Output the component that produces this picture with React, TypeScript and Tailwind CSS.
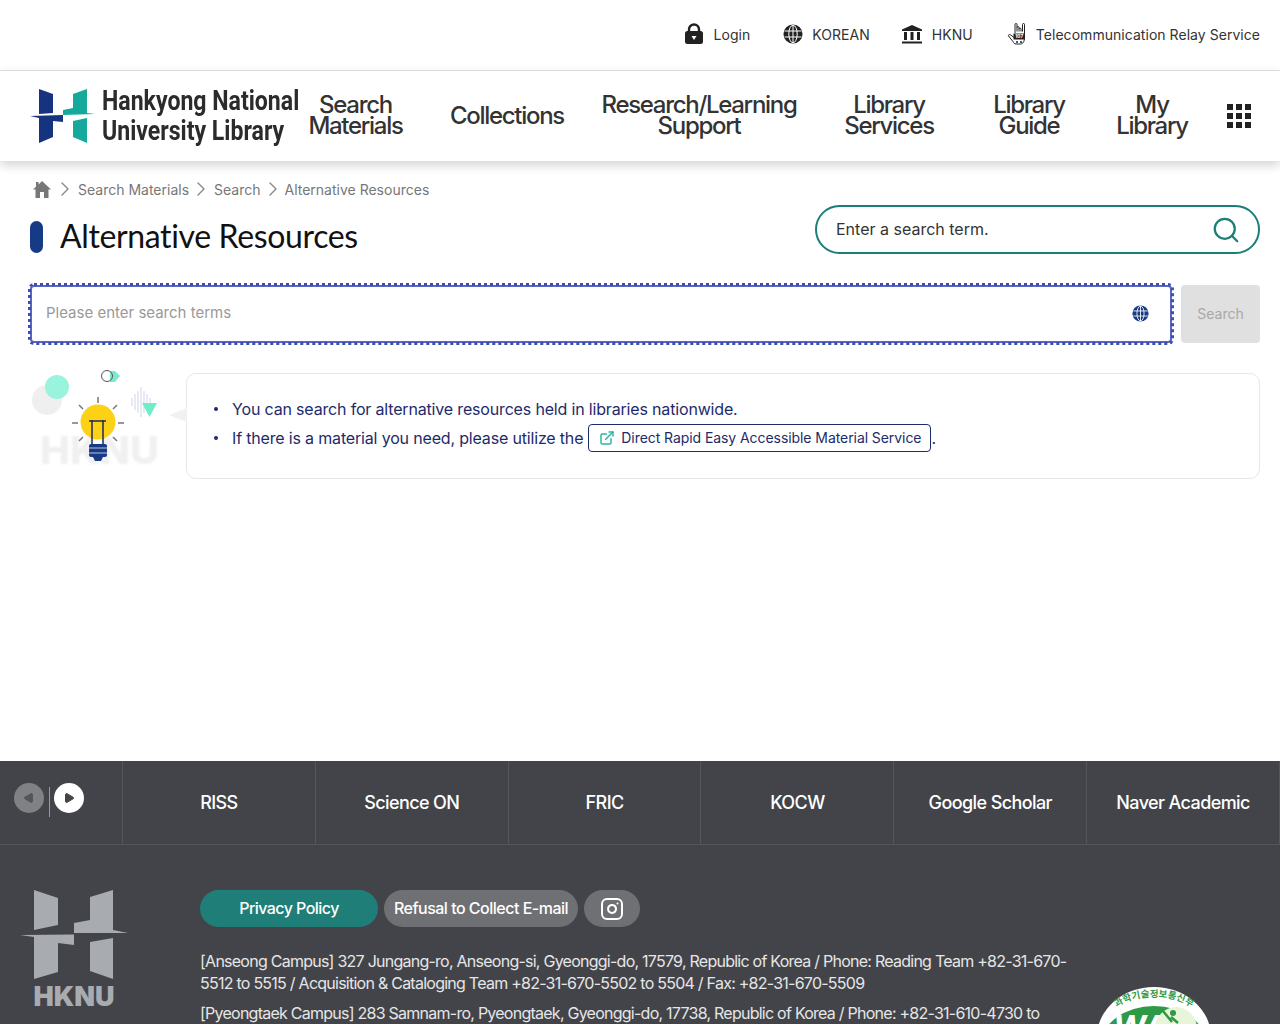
import { Search, ExternalLink, ChevronRight, Instagram, Play } from "lucide-react";

const navItems = [
  { lines: ["Search", "Materials"], width: "w-[111px]" },
  { lines: ["Collections"], width: "w-[192px]" },
  { lines: ["Research/Learning", "Support"], width: "-mx-[2px] w-[196px]" },
  { lines: ["Library", "Services"], width: "w-[188px]" },
  { lines: ["Library", "Guide"], width: "w-[92px]" },
  { lines: ["My", "Library"], width: "w-[154px]" },
];

const quickLinks = ["RISS", "Science ON", "FRIC", "KOCW", "Google Scholar", "Naver Academic"];

const LockIcon = () => (
  <svg width="20" height="22" viewBox="0 0 20 22" className="shrink-0">
    <path d="M5 9V6.500a5 5 0 0 1 10 0V9" fill="none" stroke="#222" strokeWidth="2.400" />
    <rect x="1" y="8" width="18" height="13" rx="2.500" fill="#222" />
    <path d="M7.500 13h5L10 17z" fill="#fff" />
  </svg>
);

const GlobeIcon = ({ color = "#222", size = 20 }: { color?: string; size?: number }) => (
  <svg width={size} height={size} viewBox="0 0 20 20" fill="none" stroke={color} strokeWidth="1.500" className="shrink-0">
    <circle cx="10" cy="10" r="8.800" fill={color} />
    <g stroke="#fff" strokeWidth="1">
      <ellipse cx="10" cy="10" rx="4.200" ry="8.800" />
      <path d="M10 1v18M1.500 7h17M1.500 13h17" />
    </g>
  </svg>
);

const BankIcon = () => (
  <svg width="20" height="20" viewBox="0 0 20 20" fill="#222" className="shrink-0">
    <path d="M10 1 20 5.500V7H0V5.500z" />
    <rect x="2" y="8" width="3" height="8" />
    <rect x="8.500" y="8" width="3" height="8" />
    <rect x="15" y="8" width="3" height="8" />
    <rect x="0" y="17.500" width="20" height="2" />
  </svg>
);

const HandIcon = () => (
  <svg width="20" height="24" viewBox="0 0 20 24" fill="none" stroke="#222" strokeWidth="1" className="shrink-0">
    <path d="M8 11V2.500a1 1 0 0 1 2 0V9.500M10 5.500a1 1 0 0 1 2 0V9.500M12 7a1 1 0 0 1 2 0V9.500M15.500 9.500V2.500a1 1 0 0 1 2 0V16c0 3-1.500 6-4 6H9c-1.500 0-2.500-1-3-2.500L1.500 14c-.5-1 .7-2 1.700-1.200L8 16" />
    <rect x="7" y="12" width="10.500" height="5" fill="#222" />
    <text x="12.200" y="16.300" textAnchor="middle" fontFamily="Inter, sans-serif" fontSize="4.500" fontWeight="800" fill="#fff" stroke="none">
      107
    </text>
    <path d="M9 20h2M13 20h2" strokeWidth="1.600" />
  </svg>
);

const LogoMark = () => (
  <svg width="65" height="54" viewBox="0 0 65 54" className="shrink-0">
    <path d="M9 0 23 5V24L9 25z" fill="#16337f" />
    <path d="M0 27 33 26V33L23 32V48L9 54V29z" fill="#16337f" />
    <path d="M43 5 57 0V24L65 25 33 26V21L43 19z" fill="#14a99a" />
    <path d="M43 32 57 29V54L43 48z" fill="#14a99a" />
  </svg>
);

const FooterLogo = () => (
  <svg width="108" height="90" viewBox="0 0 108 90" fill="#a8abb0" className="block">
    <path d="M14 0 38 8V35L14 40z" />
    <path d="M0 45 54 44.500V55L38 53V82L14 89V47z" />
    <path d="M70 7 93 0V40L108 43H54V33L70 30z" />
    <path d="M70 52 93 48V89L70 81z" />
  </svg>
);

const Bulb = () => (
  <svg width="132" height="104" viewBox="0 0 132 104" className="shrink-0">
    <text
      x="10"
      y="96"
      textLength="119"
      lengthAdjust="spacingAndGlyphs"
      fontFamily="Inter, sans-serif"
      fontWeight="800"
      fontSize="38"
      fill="#f0f0f0"
      className="blur-[1px]"
    >
      HKNU
    </text>
    <circle cx="17" cy="32" r="15" fill="#efefef" />
    <circle cx="27" cy="19" r="12" fill="#9af3dc" />
    <path d="M80 3h5l5 5-5 6h-5z" fill="#7fe9cf" />
    <circle cx="77" cy="8" r="5.500" fill="none" stroke="#555" strokeWidth="1" />
    <g stroke="#cfd3e8" strokeWidth="1">
      <path d="M102 30v8M105 26v16M108 23v22M111 19v30M114 23v22M117 26v16M120 30v8" />
    </g>
    <path d="M112 35h15l-7.500 14z" fill="#6fecc9" />
    <circle cx="68" cy="54" r="17.500" fill="#fcd116" />
    <g stroke="#777" strokeWidth="1.500">
      <path d="M68 29v6M49 37l4 4M87 37l-4 4M42 55h6M94 55h-6M49 73l4-4M87 73l-4-4" />
    </g>
    <path d="M62 77V52M73 77V52M59 53h17" stroke="#1f2a5c" strokeWidth="1.500" fill="none" />
    <rect x="59" y="76" width="18" height="13" rx="2" fill="#173a85" />
    <path d="M59 80h18M59 85h18" stroke="#b9c4e6" strokeWidth="1" />
    <path d="M63 89h10l-2 4h-6z" fill="#173a85" />
  </svg>
);

const WaMark = () => (
  <svg width="114" height="37" viewBox="0 0 114 37" className="block">
    <ellipse cx="57" cy="50" rx="57" ry="50" fill="#fff" />
    <ellipse cx="57" cy="58" rx="53" ry="39" fill="#2f9a45" />
    <path id="wa-arc" d="M16 24 A 44 22 0 0 1 98 24" fill="none" />
    <text fontFamily="'Noto Sans CJK KR', sans-serif" fontSize="9.500" fontWeight="700" fill="#2f9a45">
      <textPath href="#wa-arc" startOffset="50%" textAnchor="middle">
        과학기술정보통신부
      </textPath>
    </text>
    <text x="16" y="52" fontFamily="Inter, sans-serif" fontSize="32" fontWeight="700" fontStyle="italic" fill="#fff">
      WA
    </text>
    <ellipse cx="79" cy="42" rx="21" ry="22" fill="#e8f5d8" />
    <circle cx="76" cy="26" r="3" fill="#2f9a45" />
    <path d="M66 24l9 11M74 30l7 6" stroke="#2f9a45" strokeWidth="2.500" />
  </svg>
);

const HomeGlyph = () => (
  <svg width="18" height="17" viewBox="0 0 18 17" fill="#777" className="ml-[3px] shrink-0">
    <path d="M9 0 18 8.500H15.500V17H11V11H7V17H2.500V8.500H0L3 5.700V1H5.500V3.400z" />
  </svg>
);

const App = () => {
  return (
    <div className="h-[1024px] overflow-hidden bg-white font-['Inter','Noto_Sans',sans-serif] text-[#222]">
      <div className="flex h-[71px] items-center justify-end border-b border-[#e4e4e4] pb-[2px] pr-[20px] text-[14px] tracking-[0.04px] text-[#333]">
        <div className="flex items-center gap-[10px]"><LockIcon /><span>Login</span></div>
        <div className="ml-[33px] flex items-center gap-[9px]"><GlobeIcon /><span>KOREAN</span></div>
        <div className="ml-[32px] flex items-center gap-[10px]"><BankIcon /><span>HKNU</span></div>
        <div className="ml-[34px] flex items-center gap-[9px]"><HandIcon /><span>Telecommunication Relay Service</span></div>
      </div>

      <header className="relative z-10 flex h-[90px] items-center bg-white pl-[30px] shadow-[0_4px_10px_rgba(0,0,0,0.18)]">
        <div className="flex w-[270px] shrink-0 items-center gap-[7px]">
          <LogoMark />
          <div className="origin-left scale-x-[0.855] whitespace-nowrap font-['Roboto',sans-serif] text-[27px] font-bold leading-[30px] text-[#2b2b2b]">
            Hankyong National
            <br />
            University Library
          </div>
        </div>
        <nav className="flex items-center">
          {navItems.map((item) => (
            <div
              key={item.lines.join(" ")}
              className={`${item.width} shrink-0 whitespace-nowrap pb-[2px] text-center text-[24px] font-medium leading-[21px] tracking-[-1.3px] text-[#333]`}
            >
              {item.lines[0]}
              {item.lines[1] && <br />}
              {item.lines[1]}
            </div>
          ))}
          <div className="-ml-[2px] grid grid-cols-3 gap-[3px]">
            {Array.from({ length: 9 }).map((_, i) => (
              <span key={i} className="h-[6px] w-[6px] bg-[#222]" />
            ))}
          </div>
        </nav>
      </header>

      <main className="h-[600px] pl-[30px] pr-[20px]">
        <div className="flex h-[44px] items-center pt-[12px] text-[14px] text-[#777]">
          <HomeGlyph />
          <ChevronRight className="ml-[2px] h-[24px] w-[24px] stroke-[1.4] text-[#888]" />
          <span className="ml-[1px]">Search Materials</span>
          <ChevronRight className="h-[24px] w-[24px] stroke-[1.4] text-[#888]" />
          <span className="ml-[1px]">Search</span>
          <ChevronRight className="h-[24px] w-[24px] stroke-[1.4] text-[#888]" />
          <span>Alternative Resources</span>
        </div>

        <div className="flex h-[49px] items-start justify-between">
          <div className="flex items-center">
            <span className="mt-[12px] h-[32px] w-[13px] rounded-full bg-[#173a85]" />
            <h1 className="ml-[17px] mt-[11px] font-['Lato',sans-serif] text-[32px] font-normal leading-[40px] tracking-[-0.36px] text-[#111]">
              Alternative Resources
            </h1>
          </div>
          <div className="flex h-[49px] w-[445px] items-center justify-between rounded-full border-2 border-[#1a7f76] pl-[19px] pr-[17px] text-[16px] text-[#333]">
            <span className="pb-[2px]">Enter a search term.</span>
            <Search className="h-[30px] w-[30px] stroke-[1.8] text-[#1a7f76]" />
          </div>
        </div>

        <div className="mt-[31px] flex items-stretch gap-[9px]">
          <div className="flex h-[58px] flex-1 items-center justify-between rounded-[4px] border-2 border-[#5a66c0] pb-[2px] pl-[14px] pr-[21px] text-[15px] text-[#999] outline-[3px] -outline-offset-1 outline-dotted outline-[#3f4db0]">
            <span className="pt-[1px]">Please enter search terms</span>
            <GlobeIcon color="#173a85" size={17} />
          </div>
          <div className="flex h-[58px] w-[79px] items-center justify-center rounded-[4px] bg-[#e0e0e0] pb-[2px] text-[14px] text-[#a8a8a8]">
            Search
          </div>
        </div>

        <div className="mt-[25px] flex items-start">
          <Bulb />
          <div className="relative ml-[24px] mt-[5px] h-[106px] flex-1 rounded-[10px] border border-[#e6e7ea] pl-[27px] pt-[23px] text-[16px] leading-[24px] tracking-[-0.17px] text-[#1d2b6b]">
            <span className="absolute left-[-18px] top-[34px] h-0 w-0 border-y-[7px] border-r-[18px] border-y-transparent border-r-[#f0f1f3]" />
            <div className="flex items-center gap-[14px]">
              <span className="h-[4px] w-[4px] rounded-full bg-[#1d2b6b]" />
              <span>You can search for alternative resources held in libraries nationwide.</span>
            </div>
            <div className="mt-[3px] flex items-center gap-[14px]">
              <span className="h-[4px] w-[4px] rounded-full bg-[#1d2b6b]" />
              <span>If there is a material you need, please utilize the</span>
              <span className="-ml-[9px] flex h-[28px] items-center rounded-[4px] border border-[#1d2b6b] pl-[10px] pr-[9px] text-[14px] tracking-[-0.07px]">
                <ExternalLink className="mr-[6px] h-[16px] w-[16px] stroke-[2.2] text-[#2bb5a3]" />
                Direct Rapid Easy Accessible Material Service
              </span>
              <span className="-ml-[14px]">.</span>
            </div>
          </div>
        </div>
      </main>

      <footer className="h-[263px] bg-[#434449] text-white">
        <div className="flex h-[84px] border-b border-[#55565b]">
          <div className="flex w-[123px] shrink-0 items-start gap-[5px] border-r border-[#55565b] pl-[14px] pt-[22px]">
            <span className="flex h-[30px] w-[30px] items-center justify-center rounded-full bg-[#808184]">
              <Play className="h-[12px] w-[12px] rotate-180 fill-[#555] stroke-[#555]" />
            </span>
            <span className="mt-[4px] h-[30px] w-px bg-[#9a9a9a]" />
            <span className="-ml-[1px] flex h-[30px] w-[30px] items-center justify-center rounded-full bg-white">
              <Play className="h-[12px] w-[12px] fill-[#444] stroke-[#444]" />
            </span>
          </div>
          {quickLinks.map((link) => (
            <div
              key={link}
              className="flex w-[193px] items-center justify-center border-r border-[#55565b] pb-[1px] text-[18px] font-medium tracking-[-0.6px]"
            >
              {link}
            </div>
          ))}
        </div>

        <div className="flex pl-[20px] pt-[45px]">
          <div className="flex w-[180px] shrink-0 flex-col">
            <div className="w-[108px]">
              <FooterLogo />
              <div className="text-center text-[27px] font-black leading-[34px] text-[#a8abb0]">HKNU</div>
            </div>
          </div>
          <div className="w-[870px] shrink-0">
            <div className="flex gap-[6px]">
              <span className="flex h-[37px] w-[178px] items-center justify-center rounded-full bg-[#1f7f78] pb-[1px] text-[16px] font-medium tracking-[-0.55px]">
                Privacy Policy
              </span>
              <span className="flex h-[37px] w-[194px] items-center justify-center rounded-full bg-[#6f7074] pb-[1px] text-[16px] font-medium tracking-[-0.5px]">
                Refusal to Collect E-mail
              </span>
              <span className="flex h-[37px] w-[56px] items-center justify-center rounded-full bg-[#6f7074]">
                <Instagram className="h-[24px] w-[24px]" />
              </span>
            </div>
            <p className="mt-[23px] text-[16px] leading-[22px] tracking-[-0.75px] text-[#e6e6e6]">
              [Anseong Campus] 327 Jungang-ro, Anseong-si, Gyeonggi-do, 17579, Republic of Korea / Phone: Reading Team +82-31-670-5512 to 5515 / Acquisition &amp; Cataloging Team +82-31-670-5502 to 5504 / Fax: +82-31-670-5509
            </p>
            <p className="mt-[8px] text-[16px] leading-[22px] tracking-[-0.75px] text-[#e6e6e6]">
              [Pyeongtaek Campus] 283 Samnam-ro, Pyeongtaek, Gyeonggi-do, 17738, Republic of Korea / Phone: +82-31-610-4730 to
            </p>
          </div>
          <div className="ml-[27px] mt-[97px]">
            <WaMark />
          </div>
        </div>
      </footer>
    </div>
  );
};

export default App;
